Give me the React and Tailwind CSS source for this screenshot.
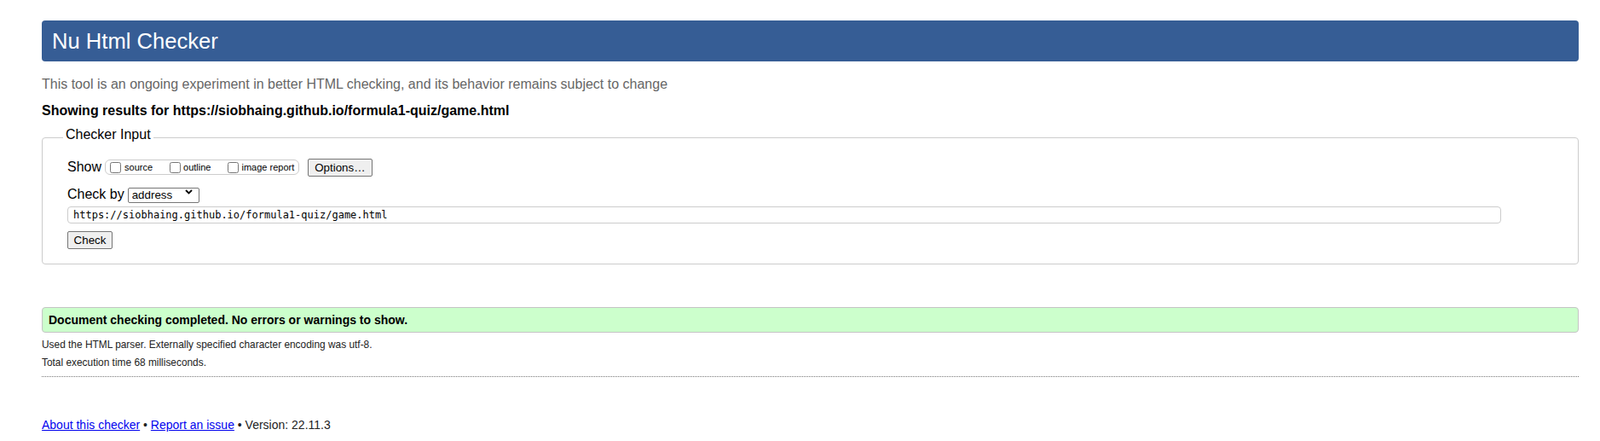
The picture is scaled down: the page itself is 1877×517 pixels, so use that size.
import React from "react";

function Chevron() {
  return (
    <svg width="9" height="6" viewBox="0 0 9 6" className="pointer-events-none absolute right-[8px] top-[6px]">
      <path d="M1 1 L4.5 4.5 L8 1" fill="none" stroke="#000" strokeWidth="1.8" />
    </svg>
  );
}

export default function App() {
  return (
    <div className="min-h-[517px] bg-white pl-[49px] pr-[25px] pt-[24px] font-['Liberation_Sans',Arial,sans-serif] text-[16px] text-black">
      <div className="flex h-[48px] items-center rounded-[4px] bg-[#365D95] pl-[12px]">
        <h1 className="text-[25.6px] font-normal leading-[30px] text-white">Nu Html Checker</h1>
      </div>

      <p className="mt-[18px] leading-[18px] text-[#666]">
        This tool is an ongoing experiment in better HTML checking, and its behavior remains subject to change
      </p>
      <p className="mt-[13px] font-bold leading-[18px]">
        Showing results for https://siobhaing.github.io/formula1-quiz/game.html
      </p>

      <fieldset className="mt-[10px] rounded-[4px] border border-[#cccccc] pb-[17px] pl-[29px] pt-[12px]">
        <legend className="-ml-[5px] px-[3px] pb-[6px] leading-[18px]">Checker Input</legend>

        <div className="flex h-[22px] items-center">
          <span className="leading-[18px]">Show</span>
          <div className="ml-[4px] flex h-[18px] items-center gap-[20px] rounded-[6px] border border-[#cccccc] pl-[5px] pr-[5px] text-[11px]">
            <label className="flex items-center">
              <input type="checkbox" className="m-0 h-[13px] w-[13px]" />
              <span className="ml-[4px]">source</span>
            </label>
            <label className="flex items-center">
              <input type="checkbox" className="m-0 h-[13px] w-[13px]" />
              <span className="ml-[3px]">outline</span>
            </label>
            <label className="flex items-center">
              <input type="checkbox" className="m-0 h-[13px] w-[13px]" />
              <span className="ml-[3px]">image report</span>
            </label>
          </div>
          <button className="ml-[10px] h-[21px] rounded-[2px] border border-[#767676] bg-[#efefef] px-[7px] text-[13.33px] leading-[15px]">
            Options…
          </button>
        </div>

        <div className="mt-[11px] flex h-[20px] items-center">
          <span className="leading-[18px]">Check by</span>
          <div className="relative ml-[4px]">
            <select className="h-[18px] w-[84px] appearance-none rounded-[2px] border border-[#767676] bg-white pl-[4px] text-[13.33px] leading-[16px]">
              <option>address</option>
            </select>
            <Chevron />
          </div>
        </div>

        <input
          type="text"
          readOnly
          value="https://siobhaing.github.io/formula1-quiz/game.html"
          className="mt-[4px] block h-[20px] w-[1682px] rounded-[4px] border border-[#cccccc] pl-[6px] font-['DejaVu_Sans_Mono',monospace] text-[12px] leading-[18px]"
        />

        <button className="mt-[9px] block h-[21px] w-[53px] rounded-[2px] border border-[#767676] bg-[#efefef] text-[13.33px] leading-[15px]">
          Check
        </button>
      </fieldset>

      <div className="mt-[50px] flex h-[30px] items-center rounded-[4px] border border-[#c4c4c4] bg-[#ccffcc] pl-[7px] text-[14px] font-bold">
        Document checking completed. No errors or warnings to show.
      </div>

      <p className="mt-[7px] text-[11.9px] leading-[14px] text-[#222]">
        Used the HTML parser. Externally specified character encoding was utf-8.
      </p>
      <p className="mt-[7px] text-[11.9px] leading-[14px] text-[#222]">Total execution time 68 milliseconds.</p>

      <hr className="mt-[9px] border-0 border-t border-dotted border-[#777]" />

      <p className="mt-[48px] text-[14px] leading-[16px] text-[#222]">
        <a href="#" className="text-[#0000ee] underline">About this checker</a>
        {" • "}
        <a href="#" className="text-[#0000ee] underline">Report an issue</a>
        {" • Version: 22.11.3"}
      </p>
    </div>
  );
}
